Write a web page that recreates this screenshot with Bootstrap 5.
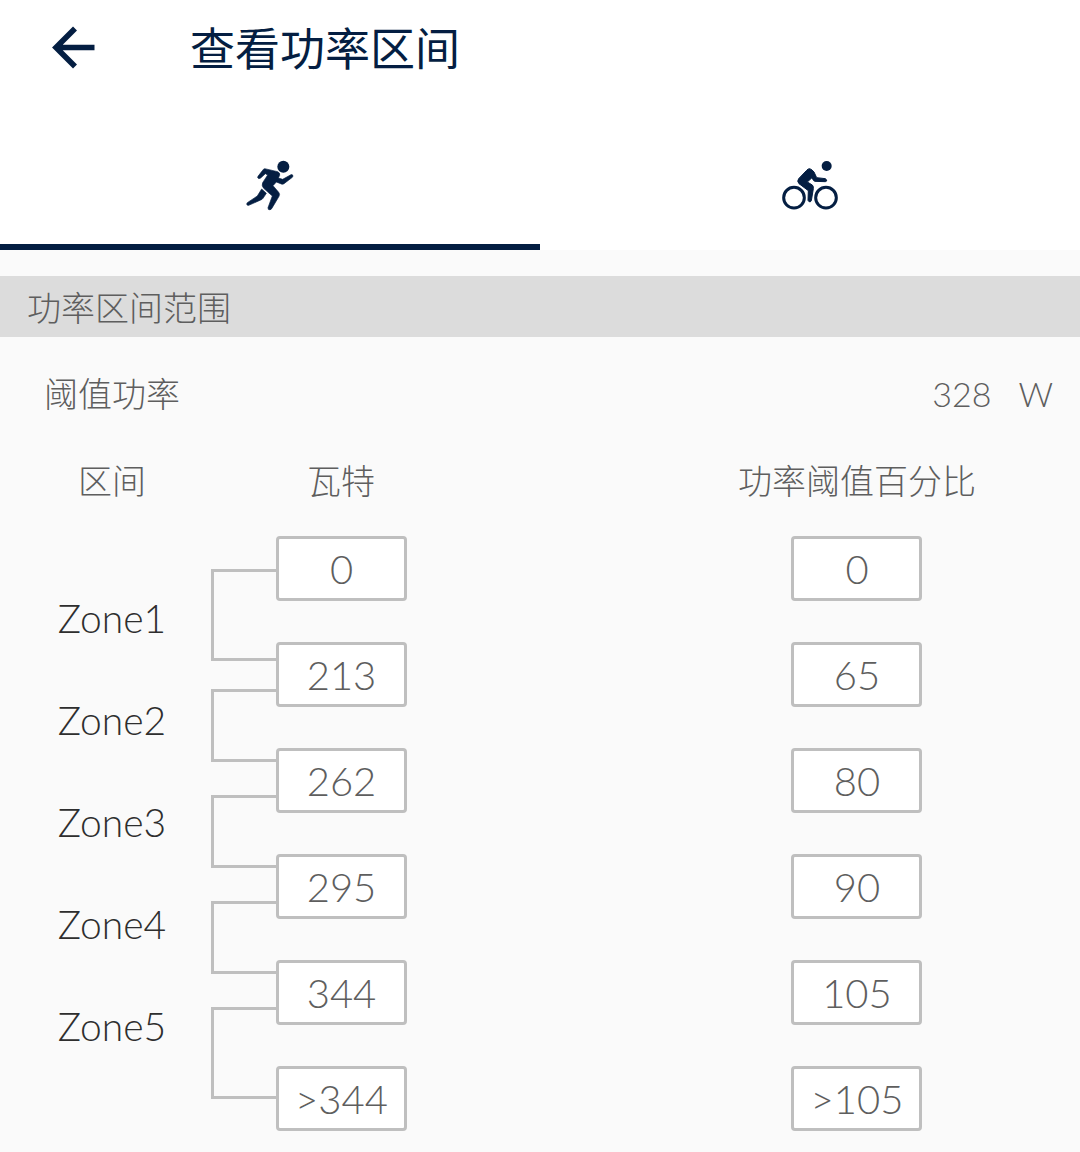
<!DOCTYPE html>
<html lang="zh-CN">
<head>
<meta charset="utf-8">
<meta name="viewport" content="width=device-width, initial-scale=1">
<title>查看功率区间</title>
<link href="https://cdn.jsdelivr.net/npm/bootstrap@5.3.0/dist/css/bootstrap.min.css" rel="stylesheet">
<style>
  :root { --navy: #041e42; --ink: #5e5e5e; --line: #bfbfbf; }
  body {
    background: #fafafa; color: var(--ink); font-weight: 300;
    font-family: Lato, "Noto Sans CJK SC", sans-serif; font-size: 34px; line-height: 48px;
  }
  .top-bar { height: 98px; color: var(--navy); padding-left: 48px; gap: 92px; }
  .top-bar h1 { font-size: 45px; font-weight: 400; line-height: 64px; }
  .back-btn { color: var(--navy); line-height: 1; }
  .sport-tabs button {
    background: #fff; color: var(--navy); border: 0; border-bottom: 6px solid #fff;
    border-radius: 0; height: 152px; padding: 47px 0 19px; line-height: 1;
  }
  .sport-tabs button.active { border-bottom-color: var(--navy); }
  .sport-tabs svg { width: 80px; height: 80px; }
  .section-title { background: #dcdcdc; font-size: 34px; line-height: 61px; margin-top: 26px; padding: 1px 27px 0; height: 61px; }
  .threshold { padding: 33px 27px 0 44px; }
  .threshold output { margin-right: 27px; }
  .col-zone { width: 224px; }
  .col-watt { width: 234px; }
  .col-percent { width: 41.3%; }
  .heads { padding-top: 39px; }
  .chart { padding: 31px 0 20px; }
  .zone-names { width: 211px; padding: 58px 0 0 13px; gap: 54px; font-size: 39px; color: #2e2e2e; }
  .links { width: 66px; padding-top: 33px; margin-right: -1px; }
  .link-line { height: 73px; margin-bottom: 33px; border: 3px solid var(--line); border-right: 0; }
  .link-line:first-child { height: 92px; margin-bottom: 28px; }
  .link-line:last-child { height: 92px; }
  .boxes { gap: 41px; }
  .boxes input {
    width: 131px; height: 65px; border: 3px solid var(--line); border-radius: 4px;
    font-size: 40px; line-height: 59px; padding: 0; font-weight: 300; color: var(--ink); background: #fff;
  }
</style>
</head>
<body>
<header class="bg-white">
  <div class="top-bar d-flex align-items-center">
    <button class="back-btn btn border-0 p-0" type="button" aria-label="返回">
      <svg width="50" height="50" viewBox="0 0 50 50" fill="none" stroke="currentColor" stroke-width="5.6"><path d="M46.500 23.500H8M27 4.500 8 23.500l19 19"/></svg>
    </button>
    <h1 class="m-0">查看功率区间</h1>
  </div>
  <nav class="sport-tabs d-flex" role="tablist">
    <button class="active flex-fill w-50" type="button" role="tab" aria-selected="true" aria-label="跑步">
      <svg viewBox="0 0 240 240" fill="currentColor">
        <circle cx="160" cy="65" r="18"/>
        <path stroke="currentColor" stroke-width="2" d="M104 71 143 80Q151 84 149 91L145 99 158 103 183 89Q188 88 189 93L187 97 162 116Q157 119 152 116L139 111 129 122 146 142Q151 148 147 154L125 191Q120 197 115 193L114 188 127 153 101 130Q94 121 98 113L113 90 106 86 92 99Q86 103 83 98L84 94 98 76Q101 71 104 71Z"/>
        <path stroke="currentColor" stroke-width="2" d="M95 132 109 145 99 160Q97 163 92 165L56 181Q51 182 50 177L52 173 82 153Z"/>
      </svg>
    </button>
    <button class="flex-fill w-50" type="button" role="tab" aria-selected="false" aria-label="骑行">
      <svg viewBox="0 0 240 240" fill="currentColor">
        <g fill="none" stroke="currentColor" stroke-width="9"><circle cx="72" cy="158" r="31"/><circle cx="168" cy="158" r="31"/></g>
        <circle cx="170" cy="63" r="15"/>
        <path stroke="currentColor" stroke-width="3" stroke-linejoin="round" d="M119 71Q126 73 132 81L140 98 166 101Q171 104 170 108L166 110 135 109Q131 108 129 104L126 98 112 111 127 120Q131 124 130 131L124 167Q122 172 117 170L114 166 115 137 87 116Q80 109 86 101L110 76Q114 71 119 71Z"/>
      </svg>
    </button>
  </nav>
</header>
<main>
  <h2 class="section-title mb-0 fw-light">功率区间范围</h2>
  <div class="threshold d-flex">
    <span class="me-auto">阈值功率</span>
    <output>328</output><span>W</span>
  </div>
  <div class="heads d-flex text-center">
    <div class="col-zone" id="head-zone">区间</div>
    <div class="col-watt" id="head-watt">瓦特</div>
    <div class="col-percent ms-auto" id="head-percent">功率阈值百分比</div>
  </div>
  <div class="chart d-flex align-items-start">
    <div class="zone-names d-flex flex-column text-center">
      <span>Zone1</span><span>Zone2</span><span>Zone3</span><span>Zone4</span><span>Zone5</span>
    </div>
    <div class="links" aria-hidden="true">
      <div class="link-line"></div><div class="link-line"></div><div class="link-line"></div><div class="link-line"></div><div class="link-line"></div>
    </div>
    <div class="boxes d-flex flex-column" role="group" aria-labelledby="head-watt">
      <input class="text-center" readonly aria-labelledby="head-watt" value="0">
      <input class="text-center" readonly aria-labelledby="head-watt" value="213">
      <input class="text-center" readonly aria-labelledby="head-watt" value="262">
      <input class="text-center" readonly aria-labelledby="head-watt" value="295">
      <input class="text-center" readonly aria-labelledby="head-watt" value="344">
      <input class="text-center" readonly aria-labelledby="head-watt" value="&gt;344">
    </div>
    <div class="boxes col-percent ms-auto d-flex flex-column align-items-center" role="group" aria-labelledby="head-percent">
      <input class="text-center" readonly aria-labelledby="head-percent" value="0">
      <input class="text-center" readonly aria-labelledby="head-percent" value="65">
      <input class="text-center" readonly aria-labelledby="head-percent" value="80">
      <input class="text-center" readonly aria-labelledby="head-percent" value="90">
      <input class="text-center" readonly aria-labelledby="head-percent" value="105">
      <input class="text-center" readonly aria-labelledby="head-percent" value="&gt;105">
    </div>
  </div>
</main>
<script src="https://cdn.jsdelivr.net/npm/bootstrap@5.3.0/dist/js/bootstrap.bundle.min.js"></script>
</body>
</html>
